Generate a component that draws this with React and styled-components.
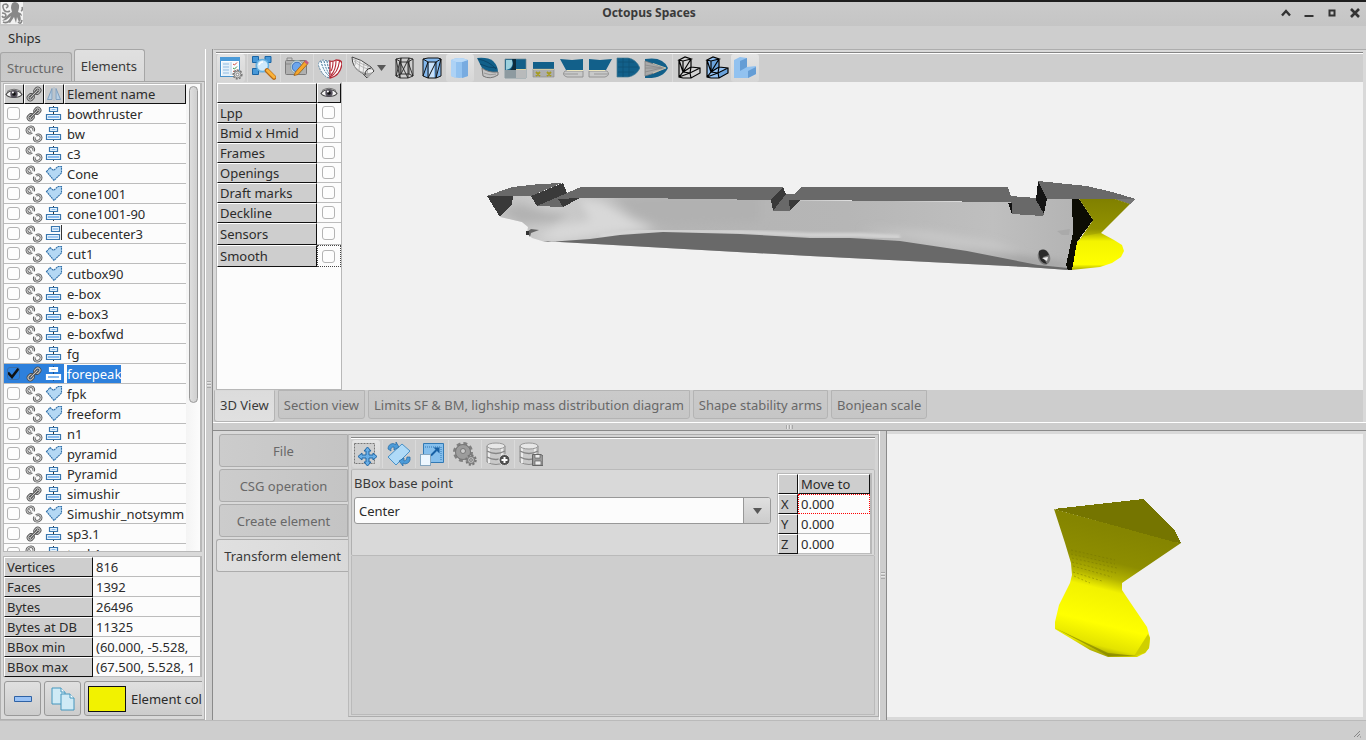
import React from "react";
import styled, { createGlobalStyle, css } from "styled-components";

const GlobalStyle = createGlobalStyle`
  *, *::before, *::after { box-sizing: border-box; }
  body { margin: 0; background: #cecece; }
  body, button, input, select, table {
    font-family: "Noto Sans", "Open Sans", sans-serif;
    font-size: 13px;
    line-height: 18px;
    color: #2b2b2b;
  }
`;

/* ---------- window frame ---------- */

const Window = styled.div`
  display: flex;
  flex-direction: column;
  height: 100vh;
  overflow: hidden;
  background: #cecece;
`;

const DesktopEdge = styled.div`
  flex: none;
  height: 2px;
  background: #1d1d1d;
`;

const TitleBar = styled.header`
  flex: none;
  display: grid;
  grid-template-columns: 1fr auto 1fr;
  align-items: center;
  height: 24px;
  padding: 0 2px 2px 0;
  background: linear-gradient(#cacaca, #c5c5c5);
`;

const AppIcon = styled.svg`
  width: 22px;
  height: 22px;
  margin-left: 1px;
`;

const Title = styled.h1`
  margin: 0;
  padding-right: 66px;
  font-size: 12px;
  line-height: 20px;
  font-weight: 700;
  color: #3a3a3a;
`;

const WindowButtons = styled.div`
  display: flex;
  justify-content: flex-end;
  gap: 5px;
`;

const WindowButton = styled.button`
  display: grid;
  place-items: center;
  width: 18px;
  height: 20px;
  padding: 0;
  border: 0;
  background: none;
`;

const MenuBar = styled.nav`
  flex: none;
  display: flex;
  align-items: center;
  height: 23px;
  padding-left: 4px;
`;

const MenuButton = styled.button`
  padding: 0 4px;
  border: 0;
  background: none;
`;

const Workspace = styled.main`
  flex: 1;
  min-height: 0;
  display: grid;
  grid-template-columns: 205px 8px minmax(0, 1fr);
`;

const StatusBar = styled.footer`
  flex: none;
  display: flex;
  justify-content: flex-end;
  align-items: flex-end;
  height: 20px;
  padding: 0 5px 2px 0;
  border-top: 1px solid #bababa;
`;

const Splitter = styled.div`
  display: grid;
  place-items: center;
  background: #cdcdcd;
  border: 0 solid #8a8a8a;
  ${(p) =>
    p.$horizontal
      ? css`height: 9px; border-width: 1px 0; border-top-color: #fff; border-bottom-color: #8a8a8a;`
      : css`border-width: 0 1px; border-left-color: #fff; border-right-color: #8a8a8a;`}
`;

const Grip = styled.i`
  width: ${(p) => (p.$horizontal ? 7 : 4)}px;
  height: ${(p) => (p.$horizontal ? 4 : 7)}px;
  background: repeating-linear-gradient(
    ${(p) => (p.$horizontal ? "90deg" : "180deg")},
    #a8a8a8 0 1px, #e6e6e6 1px 2px, #cdcdcd 2px 3px
  );
`;

/* ---------- tabs ---------- */

const LeftColumn = styled.section`
  display: flex;
  flex-direction: column;
  min-width: 0;
  min-height: 0;
`;

const TopTabs = styled.div`
  flex: none;
  display: flex;
  align-items: flex-end;
  gap: 2px;
  height: 32px;
`;

const TopTab = styled.button`
  height: ${(p) => (p.$active ? 32 : 29)}px;
  padding: ${(p) => (p.$active ? 0 : 2)}px 7px 0 6px;
  border: 1px solid #a6a6a6;
  border-bottom: 0;
  border-radius: 3px 3px 0 0;
  white-space: nowrap;
  color: ${(p) => (p.$active ? "#3a3a3a" : "#686868")};
  background: ${(p) => (p.$active ? "linear-gradient(#e0e0e0, #d9d9d9)" : "linear-gradient(#c6c6c6, #cacaca)")};
`;

const LeftPanel = styled.div`
  flex: 1;
  min-height: 0;
  display: flex;
  flex-direction: column;
  gap: 4px;
  padding: 1px 2px 3px;
  border: 1px solid #b0b0b0;
  border-top-color: #a6a6a6;
  background: #d9d9d9;
  overflow: hidden;
`;

const BottomTabs = styled.div`
  flex: none;
  display: flex;
  align-items: flex-start;
  gap: 3px;
  height: 32px;
  margin-left: -2px;
  background: #cdcdcd;
`;

const BottomTab = styled.button`
  height: ${(p) => (p.$active ? 32 : 29)}px;
  padding: 0 5px ${(p) => (p.$active ? 2 : 0)}px;
  border: 1px solid #b4b4b4;
  border-top-color: ${(p) => (p.$active ? "#d9d9d9" : "#b4b4b4")};
  border-radius: 0 0 3px 3px;
  white-space: nowrap;
  color: ${(p) => (p.$active ? "#3a3a3a" : "#686868")};
  background: ${(p) => (p.$active ? "linear-gradient(#dcdcdc, #e0e0e0)" : "linear-gradient(#cacaca, #c6c6c6)")};
`;

const SideTabs = styled.div`
  display: flex;
  flex-direction: column;
  align-items: flex-end;
  gap: 2px;
  width: 133px;
  padding-top: 3px;
`;

const SideTab = styled.button`
  width: ${(p) => (p.$active ? 132 : 129)}px;
  height: 33px;
  padding: 0;
  border: 1px solid #acacac;
  border-right: ${(p) => (p.$active ? 0 : "1px solid #acacac")};
  border-radius: 3px 0 0 3px;
  white-space: nowrap;
  color: ${(p) => (p.$active ? "#3a3a3a" : "#686868")};
  background: ${(p) => (p.$active ? "linear-gradient(90deg, #e0e0e0, #d9d9d9)" : "linear-gradient(90deg, #cccccc, #c4c4c4)")};
`;

/* ---------- tables ---------- */

const GridFrame = styled.div`
  display: flex;
  flex: ${(p) => (p.$grow ? 1 : "none")};
  min-height: 0;
  overflow: hidden;
  border: 1px solid #b8b8b8;
  border-right-width: 2px;
  border-bottom-width: ${(p) => (p.$grow ? 1 : 0)}px;
  background: #fcfcfc;
`;

const Grid = styled.table`
  width: ${(p) => p.$width};
  flex: none;
  align-self: flex-start;
  table-layout: fixed;
  border-collapse: separate;
  border-spacing: 0;
`;

const cell = css`
  height: ${(p) => p.$height || 20}px;
  padding: 0 0 0 3px;
  overflow: hidden;
  white-space: nowrap;
  text-align: left;
  font-weight: 400;
  vertical-align: middle;
`;

const HeadCell = styled.th`
  ${cell}
  background: #cecece;
  border: 1px solid #fff;
  border-right-color: #111;
  border-bottom-color: #111;
  padding-left: ${(p) => (p.$icon ? 0 : 2)}px;
`;

const BodyCell = styled.td`
  ${cell}
  line-height: 18px;
  background: ${(p) => (p.$selected ? "#2d80dc" : "#fcfcfc")};
  border-bottom: 1px solid #bcbcbc;
  padding-left: ${(p) => (p.$icon ? 0 : 3)}px;
  padding-top: ${(p) => (p.$icon ? 0 : 1)}px;
  ${(p) => p.$focus && css`
    border: 1px dotted ${p.$focus};
    padding-top: 0;
    padding-left: ${p.$icon ? 0 : 2}px;
  `}
`;

const CellIcon = styled.svg`
  display: block;
  width: 18px;
  height: 18px;
  margin: 0 auto;
`;

const Check = styled.input`
  appearance: none;
  display: block;
  width: 13px;
  height: 13px;
  margin: 0 0 0 ${(p) => p.$inset || 3}px;
  border: 1px solid #b4b4b4;
  border-radius: 3px;
  background: #fdfdfd;
  &:checked {
    border-color: #3b6ea8;
    background: #2d80dc url("data:image/svg+xml,%3Csvg xmlns='http://www.w3.org/2000/svg' viewBox='0 0 13 13'%3E%3Cpath d='M1 5.500L5 10L12 1' fill='none' stroke='%23111' stroke-width='2.600'/%3E%3C/svg%3E") center / 13px 13px;
  }
`;

const SelectedText = styled.span`
  color: #fff;
  background: #2d80dc;
`;

const ScrollBar = styled.div`
  flex: 1;
  padding: 2px 0 0 3px;
  background: linear-gradient(90deg, #f4f4f4, #fcfcfc);
`;

const ScrollThumb = styled.div`
  width: 9px;
  height: 317px;
  border: 1px solid #989898;
  border-radius: 5px;
  background: linear-gradient(90deg, #dedede, #cfcfcf);
`;

/* ---------- left footer ---------- */

const ButtonRow = styled.div`
  flex: none;
  display: flex;
  gap: 3px;
  padding-left: 1px;
  overflow: hidden;
`;

const PushButton = styled.button`
  flex: none;
  display: flex;
  align-items: center;
  justify-content: center;
  gap: 5px;
  width: ${(p) => (p.$wide ? 140 : 37)}px;
  height: 35px;
  padding: 0 3px;
  ${(p) => p.$wide && css`justify-content: flex-start;`}
  border: 1px solid #999;
  border-radius: 3px;
  white-space: nowrap;
  background: linear-gradient(#e0e0e0, #cccccc);
`;

const Swatch = styled.span`
  width: 38px;
  height: 26px;
  border: 1px solid #111;
  background: #f2f200;
`;

/* ---------- right side ---------- */

const RightColumn = styled.section`
  display: grid;
  grid-template-rows: minmax(0, 373fr) 9px minmax(0, 289fr);
  min-width: 0;
`;

const ViewPane = styled.div`
  display: flex;
  flex-direction: column;
  min-height: 0;
  padding: 2px 3px 0 2px;
  border-top: 1px solid #adadad;
  border-left: 1px solid #d9d9d9;
  background: #d9d9d9;
`;

const ToolBar = styled.div`
  flex: none;
  display: flex;
  align-items: center;
  height: ${(p) => p.$height || 30}px;
  padding-left: 1px;
  border-top: 1px solid #858585;
  box-shadow: inset 0 1px #fff;
  background: #cecece;
`;

const ToolButton = styled.button`
  flex: none;
  display: flex;
  align-items: center;
  justify-content: center;
  gap: 2px;
  width: ${(p) => p.$width || 28}px;
  height: 28px;
  padding: 0;
  padding-right: ${(p) => (p.$width ? 3 : 0)}px;
  border: 0;
  border-radius: 3px;
  background: ${(p) => (p.$active ? "linear-gradient(#e4e4e4, #d6d6d6)" : "none")};
`;

const ToolIcon = styled.svg`
  flex: none;
  width: 24px;
  height: 24px;
`;

const Divider = styled.i`
  flex: none;
  width: 1px;
  height: 28px;
  margin: 0 2px;
  background: #dadada;
`;

const ViewBody = styled.div`
  flex: 1;
  min-height: 0;
  display: grid;
  grid-template-columns: 126px minmax(0, 1fr);
  background: #f1f1f1;
`;

const ViewOptions = styled.div`
  background: #fcfcfc;
  border: 1px solid #b8b8b8;
  border-top-color: #d9d9d9;
`;

const Scene = styled.svg`
  display: block;
  width: 100%;
  height: 100%;
  min-height: 0;
  background: #f1f1f1;
`;

const LowerPane = styled.div`
  display: grid;
  grid-template-columns: minmax(0, 666fr) 8px minmax(0, 479fr);
  min-height: 0;
  background: #d9d9d9;
`;

const Tools = styled.div`
  display: flex;
  min-width: 0;
  padding: 0 0 3px 2px;
`;

const ToolPanel = styled.div`
  flex: 1;
  min-width: 0;
  display: flex;
  flex-direction: column;
  margin-top: 3px;
  padding: 2px 3px 1px 2px;
  border: 1px solid #adadad;
  border-left-color: #bababa;
  background: #d4d4d4;
`;

const TransformForm = styled.form`
  flex: none;
  display: flex;
  align-items: flex-start;
  gap: 6px;
  height: 87px;
  padding: 3px 2px 2px;
  border: 1px solid #bababa;
  border-left-color: #b0b0b0;
  border-radius: 2px;
  background: #d9d9d9;
`;

const Field = styled.div`
  flex: 1;
  min-width: 0;
  display: flex;
  flex-direction: column;
  gap: 4px;
`;

const FieldLabel = styled.label`
  height: 20px;
  line-height: 20px;
  color: #3a3a3a;
`;

const SelectBox = styled.div`
  display: grid;
  grid-template-columns: minmax(0, 1fr) 27px;
  height: 27px;
  border: 1px solid #989898;
  border-radius: 3px;
  background: #fcfcfc;
  overflow: hidden;
`;

const Select = styled.select`
  grid-area: 1 / 1 / 2 / 3;
  appearance: none;
  min-width: 0;
  padding: 0 4px;
  border: 0;
  background: none;
`;

const SelectArrow = styled.span`
  grid-area: 1 / 2;
  display: grid;
  place-items: center;
  border-left: 1px solid #989898;
  pointer-events: none;
  background: linear-gradient(#e0e0e0, #cccccc);
`;

const Filler = styled.div`
  flex: 1;
  background: #cecece;
  border: 1px solid #bababa;
  border-width: 0 1px 1px;
`;

const PreviewPane = styled.div`
  min-width: 0;
  min-height: 0;
  padding: 3px 3px 3px 0;
`;

/* ---------- small icons ---------- */

const Eye = () => (
  <CellIcon viewBox="0 0 18 18" aria-hidden="true">
    <path d="M1 9.500C4 4.500 14 4.500 17 9.500C14 13.500 4 13.500 1 9.500Z" fill="#f4f4f4" stroke="#444" strokeWidth="1.100" />
    <path d="M2 6.500Q9 2 16 6.500" fill="none" stroke="#777" />
    <circle cx="9" cy="9" r="3.700" fill="#55505c" />
    <circle cx="9" cy="9" r="1.800" fill="#111" />
    <circle cx="7.900" cy="7.600" r="1" fill="#fff" />
  </CellIcon>
);

const joinedLinks = "M3.500 6.800H5Q7 6.800 7 9Q7 11.200 5 11.200H3.500Q1.500 11.200 1.500 9Q1.500 6.800 3.500 6.800ZM13 6.800H14.500Q16.500 6.800 16.500 9Q16.500 11.200 14.500 11.200H13Q11 11.200 11 9Q11 6.800 13 6.800Z";
const openLinks = "M7 7.500Q4.500 9 2.600 7.300Q1 5 3 3Q5.500 1 7.800 2.300Q9.500 4 8.300 6M4.800 5.500L5.300 5M11 10.500Q13.500 9 15.400 10.700Q17 13 15 15Q12.500 17 10.200 15.700Q8.500 14 9.700 12";

const Link = ({ joined }) => (
  <CellIcon viewBox="0 0 18 18" aria-hidden="true">
    {joined ? (
      <g fill="none" transform="rotate(-45 9 9)">
        <path d={joinedLinks} stroke="#4a4a4a" strokeWidth="2.800" />
        <path d={joinedLinks} stroke="#c0c0c0" strokeWidth="1.200" />
        <path d="M4 9H14" stroke="#3f3f3f" strokeWidth="2.800" />
        <path d="M4 9H14" stroke="#d0d0d0" strokeWidth="1" />
      </g>
    ) : (
      <g fill="none">
        <path d={openLinks} stroke="#505050" strokeWidth="2.600" />
        <path d={openLinks} stroke="#cfcfcf" strokeWidth="1.100" />
      </g>
    )}
  </CellIcon>
);

const Shape = ({ kind, selected }) => (
  <CellIcon viewBox="0 0 18 18" aria-hidden="true">
    {kind === "free" ? (
      <path d="M1.500 6.500L5 2.500L8.500 5.500L13 1.500L16.500 1.500V8L9 15.500Z" fill="#b4d8f4" stroke="#2d6ea8" strokeWidth="1.100" strokeDasharray="2 .6" />
    ) : kind === "side" ? (
      <g>
        <path d="M6.500 1.500H14.500V6.500H6.500ZM1.500 9.500H14.500V14.500H1.500Z" fill="#e8f4fd" stroke="#3876ae" strokeWidth="1.200" />
        <path d="M3 12H13M8 4H13" stroke="#8abcf0" strokeWidth="1.500" />
        <path d="M16.500 0V15" stroke="#333" />
      </g>
    ) : (
      <g>
        <path d="M8.500 1V16" stroke={selected ? "#1c4f86" : "#333"} />
        <path d="M4.500 2.500H12.500V6.500H4.500ZM1.500 9.500H15.500V14.500H1.500Z" fill={selected ? "#fff" : "#e8f4fd"} stroke={selected ? "#fff" : "#3876ae"} strokeWidth="1.200" />
        <path d="M3 12H14" stroke="#8abcf0" strokeWidth="2" />
        <path d="M6.500 4.500H10.500" stroke="#8abcf0" />
      </g>
    )}
  </CellIcon>
);

const Mirror = () => (
  <CellIcon viewBox="0 0 18 18" aria-hidden="true">
    <path d="M7 3.500V14.500H2.500ZM11 3.500V14.500H15.500Z" fill="#b5cfe6" stroke="#7f9fbf" />
    <path d="M9 2V16" stroke="#a9bccd" />
  </CellIcon>
);

const Down = () => (
  <svg width="9" height="6" viewBox="0 0 9 6" aria-hidden="true">
    <path d="M0 0H9L4.500 6Z" fill="#585858" />
  </svg>
);

/* ---------- toolbar drawings ---------- */

const drawings = {
  settings: (
    <>
      <rect x="1.500" y="1.500" width="19" height="19" fill="#fbfdff" stroke="#4a92cc" />
      <path d="M1 1H21V5H1Z" fill="#4a9ad8" />
      <path d="M3 6H11V20H3Z" fill="#e4f0fa" />
      <path d="M4 8H10M4 11H10M4 14H10M4 17H10" stroke="#8fbbe2" />
      <path d="M12 6V19" stroke="#a7c8e4" />
      <path d="M14 8L15.500 9L18 6.500M14 15L15.500 16L18 13.500" fill="none" stroke="#d04a3a" />
      <path d="M14 12L15.500 13L18 10.500" fill="none" stroke="#3a9a4a" />
      <circle cx="18.500" cy="18.500" r="4.300" fill="#ddd" stroke="#777" strokeWidth="1.600" strokeDasharray="2 1.200" />
      <circle cx="18.500" cy="18.500" r="3.300" fill="#d8d8d8" stroke="#888" />
      <circle cx="18.500" cy="18.500" r="1.300" fill="#fff" stroke="#888" />
    </>
  ),
  zoom: (
    <>
      <path d="M4 4H16V16H4Z" fill="none" stroke="#74b2e2" />
      <path d="M0.500 0.500H6.500V6.500H0.500ZM13 0.500H19V6.500H13ZM0.500 12.500H6.500V18.500H0.500Z" fill="#4798d8" stroke="#1a65a4" />
      <circle cx="10.500" cy="9.500" r="6" fill="#cfe9fa" stroke="#66b1df" strokeWidth="1.500" />
      <path d="M7 9Q8 6 11 6" fill="none" stroke="#fff" strokeWidth="1.500" />
      <path d="M15 14.500L22 21.500" stroke="#b66a16" strokeWidth="4.600" strokeLinecap="round" />
      <path d="M15.500 14.500L22 21" stroke="#fab23a" strokeWidth="3" strokeLinecap="round" />
    </>
  ),
  camera: (
    <>
      <rect x="0.500" y="4.500" width="21" height="14" rx="1" fill="#b0b0b0" stroke="#7a7a7a" />
      <path d="M2 4V2H7V4M1 8H22" stroke="#888" fill="#ccc" />
      <circle cx="12" cy="11" r="6.500" fill="#d4dae0" stroke="#8aa" />
      <circle cx="12" cy="11" r="4.800" fill="#6ca6ec" stroke="#3b74bd" />
      <path d="M9 19.500L10.500 16L20 5L23 7.500L13 18.500Z" fill="#f6a72c" stroke="#a7661a" strokeWidth=".9" />
      <path d="M20 5L23 7.500" stroke="#c75b7b" strokeWidth="2.500" />
    </>
  ),
  frames: (
    <>
      <path d="M12 5V22Q4 21 0 8Q1 5 5 4Q9 5 12 5Z" fill="#f6fbff" stroke="#56819f" strokeDasharray="2 1" />
      <path d="M3 5Q5 15 12 21M6 5Q8 14 12 19M9 5Q10 12 12 15" fill="none" stroke="#3a7094" strokeDasharray="2 1" />
      <path d="M12 5Q15 6 18 4Q24 4 24 8Q22 20 12 22Z" fill="#fff" stroke="#b52a36" strokeWidth="1.300" />
      <path d="M21.500 5Q20 17 12 21M18 5Q18 14 13 19M15 5.500Q15 12 13 15" fill="none" stroke="#b52a36" strokeWidth="1.100" />
    </>
  ),
  hull: (
    <>
      <path d="M1 1Q1 12 11 17L16 22L20 18L23 15L20 11Q10 3 1 1Z" fill="#efefef" stroke="#444" />
      <path d="M2 8Q8 17 18 17L22 16L17 22L11 17Q4 14 2 8Z" fill="#a8a8a8" />
      <path d="M3 5Q13 14 21 13M2 3Q12 9 19 11M9 4L8 14M13 7L12 18M17 9L16 21M5 3L4 9" fill="none" stroke="#aaa" strokeWidth=".8" />
      <path d="M14 19Q14 13 20 12" fill="none" stroke="#333" />
    </>
  ),
  wire: (
    <path d="M4 3L9 2H17L21 3V20L16 22H8L4 20ZM4 3L9 6H16L21 3M8 6V22M16 6V22M9 2V18M17 2V18M4 20L9 18H17L21 20M4 3L8 22M8 6L16 22M16 6L21 20M9 2L4 20M17 2L9 18" fill="none" stroke="#222" strokeWidth=".9" />
  ),
  wireFill: (
    <>
      <path d="M3 3L8 2H18L21 3V20L16 22H8L3 20Z" fill="#83b8ee" />
      <path d="M9 6H14V22H9Z" fill="#c8e0f8" />
      <path d="M3 3L8 2H18L21 3V20L16 22H8L3 20ZM3 3L8 6H16L21 3M8 6V22M16 6V22M8 6L3 20M16 6L8 22M21 3L16 22" fill="none" stroke="#111" />
    </>
  ),
  solid: (
    <>
      <path d="M3 4Q11 0 20 4V20Q11 24 3 20Z" fill="#92c2f0" />
      <path d="M3 4L8 6V22L3 20Z" fill="#add2f5" />
      <path d="M14 6L20 4V20L14 22Z" fill="#78abe0" />
      <path d="M3 4Q11 0 20 4L14 6H8Z" fill="#b9d9f7" />
    </>
  ),
  bow: (
    <>
      <path d="M1 2Q12 1 17 5Q22 10 22 16Q12 17 6 12Z" fill="#12608a" />
      <path d="M2 3Q13 5 20 13M4 8Q12 12 21 12" stroke="#0b4163" strokeWidth=".8" fill="none" />
      <path d="M6 12Q12 17 22 16L22 19Q14 24 7 20Z" fill="#c4c4c4" stroke="#777" />
      <path d="M8 17Q14 20 20 18" stroke="#999" fill="none" />
    </>
  ),
  mid: (
    <>
      <path d="M1 3H22V22H1Z" fill="#12608a" stroke="#6e8791" strokeWidth=".7" />
      <path d="M1 14H12V22H1Z" fill="#8d9aa0" />
      <path d="M12 14H22V22H12Z" fill="#b8babb" />
      <path d="M2 4H8Q10 10 5 13L2 14Z" fill="#9cd0dd" />
      <path d="M8 3Q11 10 6 14H12V3Z" fill="#0d2c3c" />
      <path d="M12 13.500H22" stroke="#ddd2a0" />
    </>
  ),
  stern: (
    <>
      <path d="M1 6H22V13H1Z" fill="#12608a" />
      <path d="M1 13H22V21H1Z" fill="#adaeae" stroke="#888" strokeWidth=".6" />
      <path d="M1 13.500H22" stroke="#cfc8a0" />
      <path d="M4 16L8 20M8 16L4 20M15 16L19 20M19 16L15 20" stroke="#a59b20" strokeWidth="1.800" />
    </>
  ),
  port: (
    <>
      <path d="M0 3L12 4L23 3V14H6Z" fill="#12608a" />
      <path d="M5 15H23V21H7Q1 19 5 15Z" fill="#c8c9c9" stroke="#888" strokeWidth=".8" />
      <path d="M7 14.500H23" stroke="#ece6bd" />
      <path d="M4 18H18" stroke="#999" />
    </>
  ),
  starboard: (
    <>
      <path d="M24 3L12 4L1 3V14H18Z" fill="#12608a" />
      <path d="M19 15H1V21H17Q23 19 19 15Z" fill="#c8c9c9" stroke="#888" strokeWidth=".8" />
      <path d="M17 14.500H1" stroke="#ece6bd" />
      <path d="M20 18H6" stroke="#999" />
    </>
  ),
  top: (
    <>
      <path d="M1 2H12Q20 3 24 12Q20 20 12 21H1Z" fill="#12608a" stroke="#477c94" strokeWidth=".7" />
      <path d="M2 6H18M2 11H22M2 16H18M7 2V21M13 2V21" stroke="#0f5274" strokeWidth=".8" />
    </>
  ),
  bottom: (
    <>
      <path d="M1 3Q19 0 24 12Q19 23 1 22Z" fill="#12608a" />
      <path d="M1 5Q10 8 21 12Q10 18 1 20Z" fill="#a9a9a9" stroke="#777" strokeWidth=".7" />
      <path d="M1 9L18 12L1 16M1 12H20" stroke="#888" fill="none" strokeWidth=".8" />
      <path d="M9 7.500L22 12L9 17" fill="none" stroke="#ddd2b8" strokeWidth=".8" />
    </>
  ),
};

const bracket = (base, shade) => (
  <>
    <path d="M2 4L8 1L14 3V11L23 12V17L15 22H2Z" fill={base} />
    <path d="M6 5L14 3V11L6 16ZM13 17L23 13V17L15 22H13Z" fill={shade} />
    <path d="M2 4L8 1L14 3L6 5ZM2 4V21L6 22L14 22L23 17V12L14 11V3M6 5V16L2 21M6 16L14 11M6 16L13 17L23 12M13 17L14 22M14 3L6 16M2 4L6 16M14 11L13 17M2 21L13 17" fill="none" stroke="#000" strokeWidth="1.200" />
  </>
);

drawings.edges = bracket("#d2d2d2", "#d2d2d2");
drawings.edgesFill = bracket("#91c0f2", "#6ba3dc");
drawings.faces = (
  <>
    <path d="M1 4L7 1L14 2V11L23 10V18L15 22H1Z" fill="#92c2f0" />
    <path d="M7 5L14 2V11L7 15Z" fill="#659dd5" />
    <path d="M15 15L23 11V18L15 22Z" fill="#659dd5" />
  </>
);
drawings.move = (
  <>
    <rect x="0.500" y="1.500" width="20" height="20" fill="#cfcfcf" stroke="#777" strokeDasharray="2 1" />
    <path d="M13.500 5L17 9H15V13H19V11L23 14.500L19 18V16H15V20H17L13.500 24L10 20H12V16H8V18L4 14.500L8 11V13H12V9H10Z" fill="#69aee6" stroke="#1f66a5" />
  </>
);
drawings.rotate = (
  <>
    <path d="M1 15L15 2L23 9L9 23Z" fill="#afdaf7" stroke="#4991c7" />
    <path d="M1 7Q1 2 6 1.500L9 2.500V0L12 5L7 8V5Q3 5 4 9Z" fill="#4c9bd8" stroke="#2369a4" strokeWidth=".7" />
    <path d="M23 15Q24 21 18 22L16 21V24L12 19L17 16V19Q20 19 20 15Z" fill="#4c9bd8" stroke="#2369a4" strokeWidth=".7" />
  </>
);
drawings.scale = (
  <>
    <path d="M3.500 1.500H23.500V20.500H3.500Z" fill="#86bfec" stroke="#3279b4" />
    <path d="M5 5H21V18" fill="none" stroke="#2f79b7" strokeDasharray="1 1" />
    <path d="M11 13.500L16.500 8" stroke="#1760a4" strokeWidth="2" />
    <path d="M13.500 5.500H19.500V11.500Z" fill="#1760a4" />
    <rect x="0.500" y="12.500" width="10" height="11" fill="#edf7ff" stroke="#86a6bf" />
  </>
);
drawings.gears = (
  <>
    <circle cx="10" cy="10" r="8" fill="#909090" stroke="#808080" strokeWidth="4" strokeDasharray="3.600 2.700" />
    <circle cx="10" cy="10" r="7.500" fill="#9c9c9c" stroke="#777" />
    <circle cx="10" cy="9" r="2.500" fill="#ccc" stroke="#777" />
    <circle cx="18" cy="18" r="4.500" fill="#aaa" stroke="#777" strokeWidth="2.500" strokeDasharray="2 1.500" />
    <circle cx="18" cy="18" r="3.500" fill="#bbb" stroke="#777" />
    <circle cx="18" cy="18" r="1.300" fill="#ddd" stroke="#777" />
  </>
);

const cylinder = (
  <>
    <path d="M1 4V20Q10 25 19 20V4Z" fill="#c9c9c9" stroke="#8b8b8b" />
    <path d="M3 5V21M16 5V21" stroke="#ececec" strokeWidth="2" />
    <ellipse cx="10" cy="4" rx="9" ry="3" fill="#e7e7e7" stroke="#999" />
    <path d="M1 9Q10 14 19 9M1 15Q10 20 19 15" fill="none" stroke="#858585" strokeWidth="1.400" />
  </>
);

drawings.dbAdd = (
  <>
    {cylinder}
    <circle cx="18.500" cy="18" r="5.500" fill="#4e4e4e" stroke="#ddd" />
    <path d="M18.500 15V21M15.500 18H21.500" stroke="#fff" strokeWidth="2" />
  </>
);
drawings.dbSave = (
  <>
    {cylinder}
    <path d="M13.500 12.500H22L24 14V23.500H13.500Z" fill="#999" stroke="#666" />
    <path d="M16 13V16H21V13M16 23V19H22V23Z" fill="#eee" stroke="#666" strokeWidth=".7" />
  </>
);

const Tool = ({ name, label, active, menu }) => (
  <ToolButton type="button" aria-label={label} $active={active} $width={menu ? 41 : undefined}>
    <ToolIcon viewBox="0 0 24 24" aria-hidden="true">{drawings[name]}</ToolIcon>
    {menu && <Down />}
  </ToolButton>
);

/* ---------- 3D scenes ---------- */

const sidePath =
  "M500 217L513 196H580L771 200L1011 202L1047 198H1073L1080 240L1069 270L1027 267L810 256L542 241L532 238L527 233L528 227L522 222Z";

const HullScene = () => (
  <Scene viewBox="342 82 1021 308" role="img" aria-label="Ship hull">
    <defs>
      <linearGradient id="side" x1="0" x2="1" y1="0" y2="0">
        <stop offset="0" stopColor="#c2c2c2" />
        <stop offset=".1" stopColor="#cccccc" />
        <stop offset=".2" stopColor="#c0c0c0" />
        <stop offset=".3" stopColor="#b4b4b4" />
        <stop offset=".6" stopColor="#b6b6b6" />
        <stop offset=".85" stopColor="#bfbfbf" />
        <stop offset="1" stopColor="#b3b3b3" />
      </linearGradient>
      <linearGradient id="bulb" x1="0" x2="0" y1="0" y2="1">
        <stop offset="0" stopColor="#b5b500" />
        <stop offset=".22" stopColor="#f4f400" />
        <stop offset=".85" stopColor="#ffff00" />
        <stop offset="1" stopColor="#a7a700" />
      </linearGradient>
      <linearGradient id="flare" x1="0" x2="0" y1="0" y2="1">
        <stop offset="0" stopColor="#808000" />
        <stop offset=".7" stopColor="#929200" />
        <stop offset="1" stopColor="#d6d600" />
      </linearGradient>
      <clipPath id="sideClip"><path d={sidePath} /></clipPath>
      <filter id="soft"><feGaussianBlur stdDeviation="4" /></filter>
      <filter id="softLine"><feGaussianBlur stdDeviation="1.500" /></filter>
    </defs>
    <path d={sidePath} fill="url(#side)" />
    <g clipPath="url(#sideClip)">
      <g filter="url(#soft)">
        <path d="M500 210L520 204L545 212L570 214L555 222L520 224Z" fill="#b2b2b2" />
        <path d="M578 198L602 202L632 220L655 229L610 234L560 240L536 238L560 226L590 220Z" fill="#d8d8d8" />
        <path d="M612 196H760V222L660 224L634 214Z" fill="#b1b1b1" />
        <path d="M860 229L930 232L990 242L1020 252L990 250L920 239Z" fill="#c9c9c9" />
        <path d="M960 249L1040 260L1068 264V268L1030 266Z" fill="#999" />
      </g>
      <path d="M600 236L640 231L680 231L740 232L810 235L860 235L900 237" fill="none" stroke="#d6d6d6" strokeWidth="4" filter="url(#softLine)" />
    </g>
    <path d="M548 242L590 239L620 235L663 232L740 234L810 238L850 238L900 241L967 251L1038 265L1068 268V270L1027 267L810 256L542 241Z" fill="#696969" />
    <g shapeRendering="crispEdges">
      <path d="M487 196L512 187L540 184L562 183L531 196Z" fill="#696969" />
      <path d="M487 196H513L512 204L500 217Z" fill="#393939" />
      <path d="M531 196L563 183L567 193L537 206Z" fill="#3a3a3a" />
      <path d="M537 206L567 193L581 187H783L771 200L633 198H580L563 207Z" fill="#696969" />
      <path d="M558 199L580 198L563 207Z" fill="#393939" />
      <path d="M783 187L786 194L773 211L771 200Z" fill="#393939" />
      <path d="M786 194H794L789 201L790 211H773Z" fill="#696969" />
      <path d="M789 200H800L790 211Z" fill="#393939" />
      <path d="M801 187H1008L1011 196L1036 198L1044 214L1043 216L1012 214V203L1009 202L914 201L789 200Z" fill="#696969" />
      <path d="M1008 203H1012V214Z" fill="#111" />
      <path d="M1038 181L1087 186L1112 192L1136 199L1130 204L1115 199H1047Z" fill="#696969" />
      <path d="M1038 181L1047 199L1044 214L1036 200Z" fill="#151515" />
      <path d="M1114 199L1136 199L1130 204Z" fill="#777" />
    </g>
    <path d="M1079 199H1115L1130 204L1101 233L1102 236L1078 242L1093 220Z" fill="url(#flare)" />
    <path d="M1084 236L1101 233L1114 240L1122 245L1124 251L1121 257L1112 263L1100 267L1071 270L1077 242Z" fill="url(#bulb)" />
    <path d="M1072 199H1079L1093 220L1077 242L1072 270H1068L1066 265L1073 233Z" fill="#0c0c04" shapeRendering="crispEdges" />
    <path d="M1057 231L1070 229L1069 235L1062 235Z" fill="#aaa" />
    <ellipse cx="1044" cy="257" rx="6" ry="8" fill="#777" transform="rotate(-20 1044 257)" />
    <path d="M1039 251Q1046 247 1049 255L1043 257L1047 264Q1038 263 1039 251Z" fill="#2a2a2a" />
    <path d="M1042 258L1048 257L1047 261Z" fill="#eee" />
    <path d="M527 232L531 229L539 230L531 233L530 237Z" fill="#646464" />
    <path d="M526 231H529V235H526Z" fill="#333" />
  </Scene>
);

const ElementScene = () => (
  <Scene viewBox="887 434 476 283" role="img" aria-label="Forepeak element">
    <defs>
      <linearGradient id="body" gradientUnits="userSpaceOnUse" x1="1114" y1="530" x2="1084" y2="652">
        <stop offset="0" stopColor="#858500" />
        <stop offset=".25" stopColor="#8d8d00" />
        <stop offset=".38" stopColor="#b4b400" />
        <stop offset=".48" stopColor="#f2f200" />
        <stop offset=".75" stopColor="#ffff00" />
        <stop offset=".92" stopColor="#e3e300" />
        <stop offset="1" stopColor="#999900" />
      </linearGradient>
    </defs>
    <path d="M1054 509L1181 543L1122 583V590L1130 602L1147 627L1150 638L1149 648L1145 653L1137 657H1108L1090 650L1055 629V622L1059 605L1070 583L1072 575L1071 563L1065 543Z" fill="url(#body)" />
    <g stroke="#727200" strokeDasharray="2 2" opacity=".45">
      <path d="M1071 550L1115 560M1071 554L1115 564M1072 558L1117 568M1072 562L1116 573M1073 566L1112 577M1073 572L1102 581M1074 576L1090 583" />
    </g>
    <path d="M1054 509L1143 499L1162 517L1175 531L1181 543L1174 542Z" fill="#757500" shapeRendering="crispEdges" />
    <path d="M1148 634L1134 656L1145 653L1149 648L1150 638Z" fill="#cfcf00" />
    <path d="M1055 628L1108 656H1137L1108 653Z" fill="#777700" opacity=".6" />
  </Scene>
);

/* ---------- data ---------- */

const elements = [
  ["bowthruster", "box", true], ["bw", "box"], ["c3", "box"], ["Cone", "free"], ["cone1001", "free"],
  ["cone1001-90", "box"], ["cubecenter3", "side"], ["cut1", "free"], ["cutbox90", "free"], ["e-box", "box"],
  ["e-box3", "box"], ["e-boxfwd", "box"], ["fg", "box"], ["forepeak", "box", true], ["fpk", "free"],
  ["freeform", "free"], ["n1", "box"], ["pyramid", "free"], ["Pyramid", "box"], ["simushir", "box", true],
  ["Simushir_notsymm", "free"], ["sp3.1", "box", true], ["tank1", "box"],
];

const stats = [
  ["Vertices", "816"], ["Faces", "1392"], ["Bytes", "26496"], ["Bytes at DB", "11325"],
  ["BBox min", "(60.000, -5.528,"], ["BBox max", "(67.500, 5.528, 1"],
];

const viewOptions = ["Lpp", "Bmid x Hmid", "Frames", "Openings", "Draft marks", "Deckline", "Sensors", "Smooth"];
const views = ["3D View", "Section view", "Limits SF & BM, lighship mass distribution diagram", "Shape stability arms", "Bonjean scale"];
const sideTabs = ["File", "CSG operation", "Create element", "Transform element"];

const noop = () => {};

export default function App() {
  return (
    <>
      <GlobalStyle />
      <Window>
        <DesktopEdge />
        <TitleBar>
          <AppIcon viewBox="0 0 22 22" aria-hidden="true">
            <path d="M0 0H22V22H0Z" fill="#f2f2f2" />
            <path d="M10 6Q10 0 14 0Q19 1 18 6L17 10Q21 11 21 14L19 13Q21 19 18 20L16 15L15 21L13 15L9 21L7 20L10 14L5 18L1 19L8 12L11 10Z" fill="#888" />
            <path d="M9 9Q5 11 3 8Q0 2 5 2Q9 4 5 6M1 11Q5 11 5 14Q3 17 1 14M2 20Q6 22 9 18M20 9Q22 8 21 5M17 20Q20 23 21 18" fill="none" stroke="#888" strokeWidth="1.600" />
          </AppIcon>
          <Title>Octopus Spaces</Title>
          <WindowButtons>
            <WindowButton aria-label="Shade"><svg width="10" height="8" viewBox="0 0 10 8"><path d="M1 6.500L5 2L9 6.500" fill="none" stroke="#333" strokeWidth="2.400" /></svg></WindowButton>
            <WindowButton aria-label="Minimize"><svg width="10" height="8" viewBox="0 0 10 8"><path d="M0.500 7H9.500" stroke="#333" strokeWidth="2" /></svg></WindowButton>
            <WindowButton aria-label="Maximize"><svg width="8" height="8" viewBox="0 0 8 8"><path d="M1.500 1.500H6.500V6.500H1.500Z" fill="none" stroke="#333" strokeWidth="2" /></svg></WindowButton>
            <WindowButton aria-label="Close"><svg width="10" height="10" viewBox="0 0 10 10"><path d="M1 1L9 9M9 1L1 9" stroke="#333" strokeWidth="2.600" /></svg></WindowButton>
          </WindowButtons>
        </TitleBar>
        <MenuBar><MenuButton>Ships</MenuButton></MenuBar>

        <Workspace>
          <LeftColumn>
            <TopTabs>
              <TopTab>Structure</TopTab>
              <TopTab $active>Elements</TopTab>
            </TopTabs>
            <LeftPanel>
              <GridFrame $grow>
                <Grid $width="182px">
                  <colgroup><col width="20" /><col width="20" /><col width="20" /><col /></colgroup>
                  <thead>
                    <tr>
                      <HeadCell $icon><Eye /></HeadCell>
                      <HeadCell $icon><Link joined /></HeadCell>
                      <HeadCell $icon><Mirror /></HeadCell>
                      <HeadCell>Element name</HeadCell>
                    </tr>
                  </thead>
                  <tbody>
                    {elements.map(([name, kind, joined]) => {
                      const selected = name === "forepeak";
                      return (
                        <tr key={name}>
                          <BodyCell $icon $selected={selected}>
                            <Check type="checkbox" aria-label={"Show " + name} checked={selected} onChange={noop} />
                          </BodyCell>
                          <BodyCell $icon $selected={selected}><Link joined={joined} /></BodyCell>
                          <BodyCell $icon $selected={selected}><Shape kind={kind} selected={selected} /></BodyCell>
                          <BodyCell>{selected ? <SelectedText>{name}</SelectedText> : name}</BodyCell>
                        </tr>
                      );
                    })}
                  </tbody>
                </Grid>
                <ScrollBar><ScrollThumb /></ScrollBar>
              </GridFrame>
              <GridFrame>
                <Grid $width="100%">
                  <colgroup><col width="89" /><col /></colgroup>
                  <tbody>
                    {stats.map(([label, value]) => (
                      <tr key={label}>
                        <HeadCell scope="row">{label}</HeadCell>
                        <BodyCell>{value}</BodyCell>
                      </tr>
                    ))}
                  </tbody>
                </Grid>
              </GridFrame>
              <ButtonRow>
                <PushButton aria-label="Remove element">
                  <svg width="18" height="6" viewBox="0 0 18 6"><path d="M0.500 0.500H17.500V5.500H0.500Z" fill="#99c2f6" stroke="#2f62a5" /></svg>
                </PushButton>
                <PushButton aria-label="Copy element">
                  <svg width="24" height="24" viewBox="0 0 24 24">
                    <path d="M1 1H10L14 5V17H1Z" fill="#cfeaf5" stroke="#4596bd" />
                    <path d="M10 1V5H14" fill="#fff" stroke="#4596bd" />
                    <path d="M10 7H19L23 11V23H10Z" fill="#cfeaf5" stroke="#4596bd" />
                    <path d="M19 7V11H23" fill="#fff" stroke="#4596bd" />
                  </svg>
                </PushButton>
                <PushButton $wide><Swatch />Element color</PushButton>
              </ButtonRow>
            </LeftPanel>
          </LeftColumn>

          <Splitter><Grip /></Splitter>

          <RightColumn>
            <ViewPane>
              <ToolBar>
                <Tool name="settings" label="View settings" active />
                <Divider />
                <Tool name="zoom" label="Zoom to fit" />
                <Divider />
                <Tool name="camera" label="Edit snapshot" />
                <Divider />
                <Tool name="frames" label="Frames" />
                <Divider />
                <Tool name="hull" label="Hull" menu />
                <Tool name="wire" label="Wireframe" />
                <Tool name="wireFill" label="Shaded wireframe" />
                <Tool name="solid" label="Solid" active />
                <Tool name="bow" label="Perspective" />
                <Tool name="mid" label="Bow view" />
                <Tool name="stern" label="Stern view" />
                <Tool name="port" label="Port view" />
                <Tool name="starboard" label="Starboard view" />
                <Tool name="top" label="Top view" />
                <Tool name="bottom" label="Bottom view" />
                <Divider />
                <Tool name="edges" label="Element edges" />
                <Tool name="edgesFill" label="Element edges and faces" />
                <Tool name="faces" label="Element faces" active />
              </ToolBar>
              <ViewBody>
                <ViewOptions>
                  <Grid $width="100%">
                    <colgroup><col width="100" /><col /></colgroup>
                    <thead>
                      <tr><HeadCell /><HeadCell $icon><Eye /></HeadCell></tr>
                    </thead>
                    <tbody>
                      {viewOptions.map((name, i) => (
                        <tr key={name}>
                          <HeadCell scope="row" $height={i > 5 ? 22 : 20}>{name}</HeadCell>
                          <BodyCell $icon $height={i > 5 ? 22 : 20} $focus={name === "Smooth" ? "#444" : undefined}>
                            <Check type="checkbox" aria-label={name} $inset={name === "Smooth" ? 4 : 5} />
                          </BodyCell>
                        </tr>
                      ))}
                    </tbody>
                  </Grid>
                </ViewOptions>
                <HullScene />
              </ViewBody>
              <BottomTabs>
                {views.map((name, i) => <BottomTab key={name} $active={i === 0}>{name}</BottomTab>)}
              </BottomTabs>
            </ViewPane>

            <Splitter $horizontal><Grip $horizontal /></Splitter>

            <LowerPane>
              <Tools>
                <SideTabs>
                  {sideTabs.map((name, i) => <SideTab key={name} $active={i === 3}>{name}</SideTab>)}
                </SideTabs>
                <ToolPanel>
                  <ToolBar $height={32}>
                    <Tool name="move" label="Move" active />
                    <Divider />
                    <Tool name="rotate" label="Rotate" />
                    <Divider />
                    <Tool name="scale" label="Scale" />
                    <Divider />
                    <Tool name="gears" label="Process" />
                    <Divider />
                    <Tool name="dbAdd" label="Add to database" />
                    <Divider />
                    <Tool name="dbSave" label="Save to database" />
                  </ToolBar>
                  <TransformForm>
                    <Field>
                      <FieldLabel htmlFor="base-point">BBox base point</FieldLabel>
                      <SelectBox>
                        <Select id="base-point" defaultValue="Center"><option>Center</option></Select>
                        <SelectArrow><Down /></SelectArrow>
                      </SelectBox>
                    </Field>
                    <GridFrame>
                      <Grid $width="92px">
                        <colgroup><col width="20" /><col /></colgroup>
                        <thead><tr><HeadCell /><HeadCell>Move to</HeadCell></tr></thead>
                        <tbody>
                          {["X", "Y", "Z"].map((axis) => (
                            <tr key={axis}>
                              <HeadCell scope="row">{axis}</HeadCell>
                              <BodyCell $focus={axis === "X" ? "#ff0000" : undefined}>0.000</BodyCell>
                            </tr>
                          ))}
                        </tbody>
                      </Grid>
                    </GridFrame>
                  </TransformForm>
                  <Filler />
                </ToolPanel>
              </Tools>
              <Splitter><Grip /></Splitter>
              <PreviewPane><ElementScene /></PreviewPane>
            </LowerPane>
          </RightColumn>
        </Workspace>

        <StatusBar>
          <svg width="8" height="8" viewBox="0 0 8 8" aria-hidden="true"><path d="M7 1L1 7M7 4L4 7M7 7H8" stroke="#888" /></svg>
        </StatusBar>
      </Window>
    </>
  );
}
